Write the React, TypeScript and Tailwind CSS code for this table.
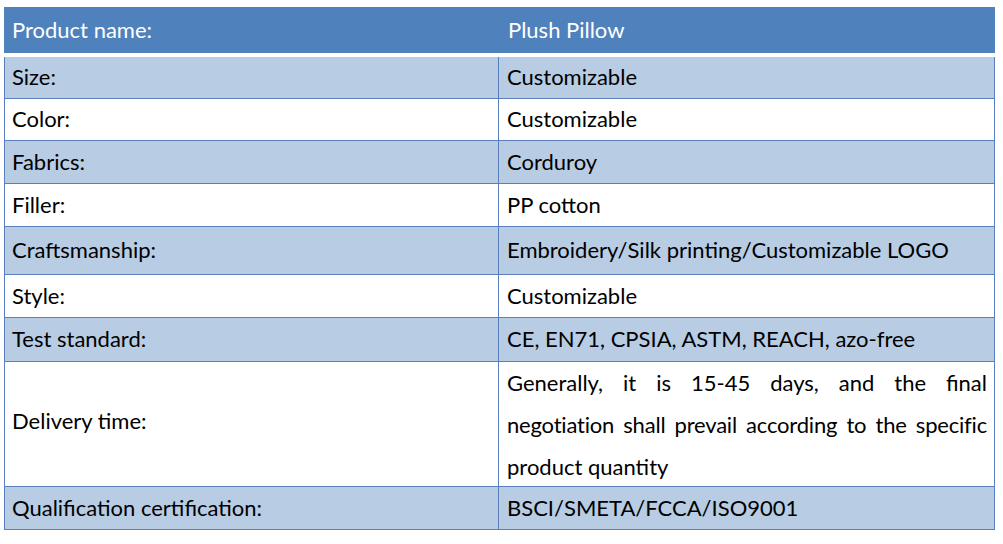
const rows: { label: string; value: string; h: number }[] = [
  { label: 'Size:', value: 'Customizable', h: 42 },
  { label: 'Color:', value: 'Customizable', h: 42 },
  { label: 'Fabrics:', value: 'Corduroy', h: 43 },
  { label: 'Filler:', value: 'PP cotton', h: 43 },
  { label: 'Craftsmanship:', value: 'Embroidery/Silk printing/Customizable LOGO', h: 48 },
  { label: 'Style:', value: 'Customizable', h: 43 },
  { label: 'Test standard:', value: 'CE, EN71, CPSIA, ASTM, REACH, azo-free', h: 44 },
  { label: 'Delivery time:', value: '', h: 125 },
  { label: 'Qualification certification:', value: 'BSCI/SMETA/FCCA/ISO9001', h: 43 },
]

export default function App() {
  return (
    <div className="w-[1003px] h-[544px] bg-white pt-[7px] pl-[4px] text-[22px] text-black font-['Lato','Open_Sans',sans-serif]">
      <div className="w-[991px]">
        <div className="h-[46px] bg-[#4f81bd] grid grid-cols-[495px_1fr] items-center text-white">
          <div className="pl-[8px] -mt-[2px]">Product name:</div>
          <div className="pl-[9px] -mt-[2px]">Plush Pillow</div>
        </div>
        <div className="mt-[4px] border-x border-[#5a7fbf]">
          {rows.map((r, i) => {
            const delivery = r.label === 'Delivery time:'
            return (
              <div
                key={r.label}
                style={{ height: r.h }}
                className={`grid grid-cols-[494px_1fr] border-b border-[#5a7fbf] ${i % 2 === 0 ? 'bg-[#b8cce4]' : 'bg-white'}`}
              >
                <div className={`flex items-center pl-[7px] border-r border-[#5a7fbf] ${delivery ? 'pb-[12px]' : 'pb-[2px]'}`}>
                  {r.label}
                </div>
                {delivery ? (
                  <div className="flex flex-col justify-center pl-[8px] pr-[7px] pb-[2px] leading-[42px]">
                    <div className="whitespace-nowrap text-justify [text-align-last:justify]">
                      Generally, it is 15-45 days, and the final
                    </div>
                    <div className="whitespace-nowrap text-justify [text-align-last:justify] tracking-[-0.2px]">
                      negotiation shall prevail according to the specific
                    </div>
                    <div>product quantity</div>
                  </div>
                ) : (
                  <div className="flex items-center pl-[8px] pb-[2px]">{r.value}</div>
                )}
              </div>
            )
          })}
        </div>
      </div>
    </div>
  )
}
